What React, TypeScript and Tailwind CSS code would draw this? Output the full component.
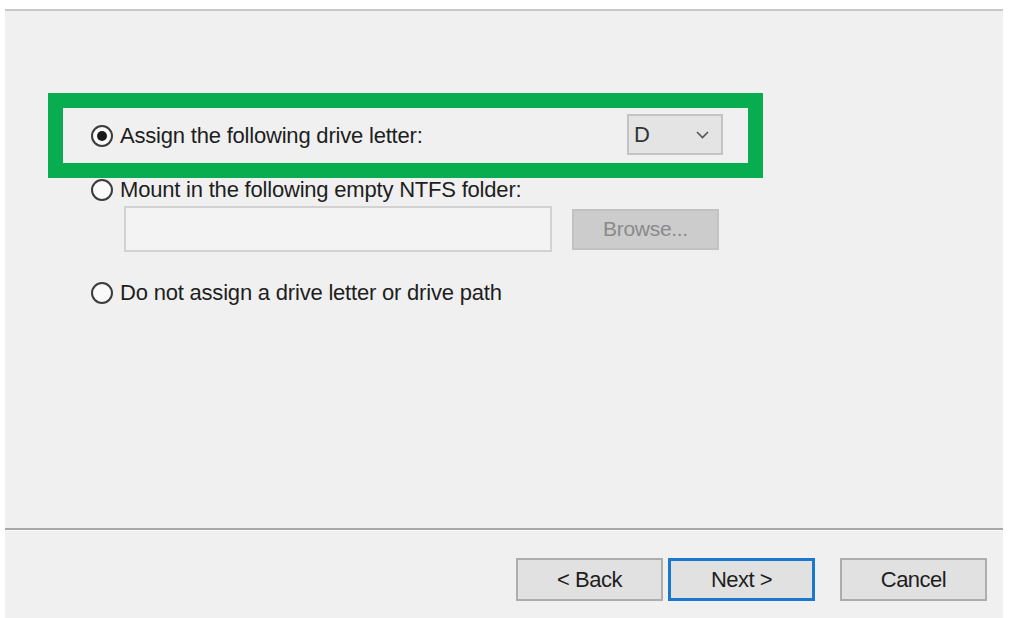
import React from 'react'

function Radio({ checked }: { checked?: boolean }) {
  return (
    <span className="flex h-[22px] w-[22px] shrink-0 items-center justify-center rounded-full border-2 border-[#3c3c3c] bg-[#fafafa]">
      {checked && <span className="h-[10px] w-[10px] rounded-full bg-[#1c1c1c]" />}
    </span>
  )
}

function Option({ checked, label }: { checked?: boolean, label: string }) {
  return (
    <div className="flex h-[24px] items-center gap-[7px]">
      <Radio checked={checked} />
      <span className="text-[22px] leading-none tracking-[-0.2px] text-[#1e1e1e]">{label}</span>
    </div>
  )
}

function WizardButton({ label, primary }: { label: string, primary?: boolean }) {
  return (
    <button
      className={`flex h-[43px] w-[147px] items-center justify-center bg-[#e1e1e1] text-[22px] tracking-[-0.5px] text-[#1e1e1e] ${
        primary ? 'border-[3px] border-[#1a78d0]' : 'border-2 border-[#adadad]'
      }`}
    >
      {label}
    </button>
  )
}

export default function App() {
  return (
    <div className="flex h-[618px] w-[1009px] flex-col bg-white font-['Liberation_Sans',Arial,sans-serif]">
      {/* top strip */}
      <div className="h-[9px] shrink-0 bg-white" />

      <div className="mx-[5px] mr-[6px] flex flex-1 flex-col border-t-2 border-[#c8c8c8] bg-[#f0f0f0]">
        {/* ── Options ── */}
        <div className="flex h-[517px] flex-col pl-[43px]">
          <div className="mt-[82px] w-[715px] border-[15px] border-[#07ad4e]">
            <div className="flex h-[55px] items-center justify-between pl-[28px] pr-[25px]">
              <Option checked label="Assign the following drive letter:" />
              <div className="mt-[-2px] flex h-[41px] w-[96px] items-center justify-between border-2 border-[#c4c4c4] bg-[#e4e4e4] pl-[5px] pr-[12px]">
                <span className="text-[22px] text-[#333]">D</span>
                <svg width="13" height="8" viewBox="0 0 13 8" fill="none">
                  <polyline points="1,1 6.5,6.5 12,1" stroke="#555" strokeWidth="1.6" />
                </svg>
              </div>
            </div>
          </div>

          <div className="pl-[43px]">
            <Option label="Mount in the following empty NTFS folder:" />
            <div className="mt-[4px] flex items-center gap-[20px] pl-[33px]">
              <div className="h-[46px] w-[428px] border-2 border-[#d2d2d2] bg-[#f3f3f3]" />
              <div className="flex h-[41px] w-[147px] items-center justify-center border-2 border-[#c2c2c2] bg-[#cccccc] text-[21px] tracking-[-0.3px] text-[#8a8a8a]">
                Browse...
              </div>
            </div>
            <div className="mt-[29px]">
              <Option label="Do not assign a drive letter or drive path" />
            </div>
          </div>
        </div>

        {/* separator */}
        <div className="h-[3px] border-t-2 border-[#a8a8a8] bg-[#fafafa]" />

        {/* ── Footer ── */}
        <div className="flex flex-1 items-start justify-end pt-[27px] pr-[16px]">
          <div className="flex gap-[5px]">
            <WizardButton label="< Back" />
            <WizardButton label="Next >" primary />
          </div>
          <div className="ml-[25px]">
            <WizardButton label="Cancel" />
          </div>
        </div>
      </div>
    </div>
  )
}
